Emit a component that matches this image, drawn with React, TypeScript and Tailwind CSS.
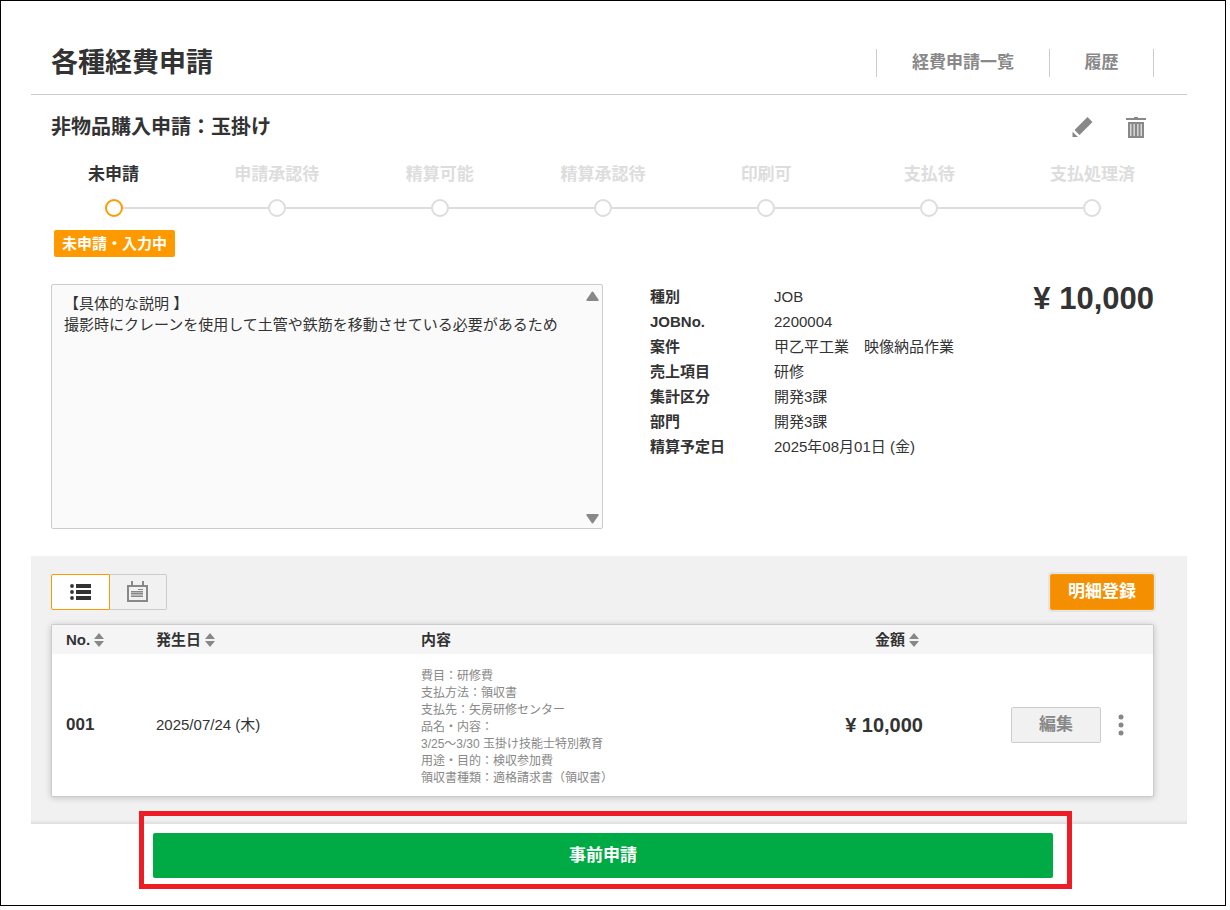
import React from "react";

const steps = ["未申請", "申請承認待", "精算可能", "精算承認待", "印刷可", "支払待", "支払処理済"];

const details: [string, string][] = [
  ["種別", "JOB"],
  ["JOBNo.", "2200004"],
  ["案件", "甲乙平工業　映像納品作業"],
  ["売上項目", "研修"],
  ["集計区分", "開発3課"],
  ["部門", "開発3課"],
  ["精算予定日", "2025年08月01日 (金)"],
];

const contents = [
  "費目：研修費",
  "支払方法：領収書",
  "支払先：矢房研修センター",
  "品名・内容：",
  "3/25～3/30 玉掛け技能士特別教育",
  "用途・目的：検収参加費",
  "領収書種類：適格請求書（領収書）",
];

const description = "【具体的な説明 】\n撮影時にクレーンを使用して土管や鉄筋を移動させている必要があるため";

function SortIcon() {
  return (
    <svg width="10" height="14" viewBox="0 0 10 14" fill="#888888" aria-hidden="true">
      <path d="M5 0 10 6H0zM5 14 0 8h10z" />
    </svg>
  );
}

function PencilIcon() {
  return (
    <svg width="22" height="22" viewBox="0 0 22 22" fill="#888888" aria-hidden="true">
      <path d="M15.500 1 20.500 6 7.500 19 2.500 14zM.5 15.700 6 21H.5z" />
    </svg>
  );
}

function TrashIcon() {
  return (
    <svg width="20" height="21" viewBox="0 0 20 21" aria-hidden="true">
      <path fill="#888888" d="M0 1h8V0h4v1h8v2H0zM2 5h16v16H2z" />
      <path fill="#d9d9d9" d="M4 7h1.500v12H4zM7.400 7h1.500v12H7.400zM11.100 7h1.500v12h-1.500zM14.500 7H16v12h-1.500z" />
    </svg>
  );
}

function ListIcon() {
  return (
    <svg width="22" height="18" viewBox="0 0 22 18" fill="#333333" aria-hidden="true">
      <circle cx="2" cy="3" r="1.900" />
      <circle cx="2" cy="9" r="1.900" />
      <circle cx="2" cy="15" r="1.900" />
      <path d="M6 1h15v4H6zM6 7h15v4H6zM6 13h15v4H6z" />
    </svg>
  );
}

function CalendarIcon() {
  return (
    <svg width="22" height="22" viewBox="0 0 22 22" aria-hidden="true">
      <path fill="#888888" fillRule="evenodd" d="M0 4h4V0h2v4h9V0h2v4h4v17H0zM2 6v13h17V6z" />
      <path fill="#888888" d="M11 8h5v1h-5z" />
      <path fill="#b8b8b8" d="M4 10h12v6H4z" />
      <path fill="#888888" d="M4 10h12v1H4zM4 12h12v1H4zM4 15h12v1H4z" />
    </svg>
  );
}

export default function App() {
  return (
    <div className="bg-white pr-1 pb-1 font-['Liberation_Sans','Noto_Sans_CJK_JP',sans-serif] text-[#333333]">
      <div className="border border-black px-[30px] pb-4">
        <div className="pr-2">
          <header className="flex items-center justify-between border-b border-[#cccccc] pt-[31px] pr-[33px] pl-5">
            <h1 className="text-[27px] leading-[62px] font-bold">各種経費申請</h1>
            <nav className="flex divide-x divide-[#cccccc] border-x border-[#cccccc] text-[17px] leading-7 font-bold text-[#888888]">
              <a href="#list" className="px-[35px]">経費申請一覧</a>
              <a href="#history" className="w-[103px] text-center">履歴</a>
            </nav>
          </header>

          <section className="pt-4 pr-8 pl-5">
            <div className="flex items-center justify-between pr-[9px]">
              <h2 className="text-xl leading-8 font-bold">非物品購入申請：玉掛け</h2>
              <div className="flex gap-8">
                <button type="button" aria-label="編集する"><PencilIcon /></button>
                <button type="button" aria-label="削除する"><TrashIcon /></button>
              </div>
            </div>

            <ol className="-mx-[19px] mt-[18px] grid grid-cols-7 text-center text-[17px] leading-7 font-bold">
              {steps.map((step, i) => (
                <li key={step} className={i === 0 ? "text-[#333333]" : "text-[#dddddd]"}>
                  <div>{step}</div>
                  <div className="mt-[10px] flex items-center">
                    <span className={i === 0 ? "h-[2px] flex-1" : "h-[2px] flex-1 bg-[#dddddd]"} />
                    <span
                      className={
                        i === 0
                          ? "size-[18px] rounded-full border-2 border-[#ff9900] bg-white"
                          : "size-[18px] rounded-full border-2 border-[#dddddd] bg-white"
                      }
                    />
                    <span className={i === steps.length - 1 ? "h-[2px] flex-1" : "h-[2px] flex-1 bg-[#dddddd]"} />
                  </div>
                </li>
              ))}
            </ol>
            <span className="mt-[13px] ml-[3px] inline-block rounded-xs bg-[#ff9900] px-2 text-[15px] leading-[27px] font-bold text-white">
              未申請・入力中
            </span>

            <div className="mt-[27px] flex items-start">
              <div className="flex h-[245px] w-1/2 rounded-xs border border-[#cccccc] bg-[#fafafa]">
                <textarea
                  readOnly
                  aria-label="具体的な説明"
                  defaultValue={description}
                  className="flex-1 resize-none overflow-hidden py-2 pl-3 text-[15px] leading-[21px] outline-none"
                />
                <div className="flex flex-col justify-between px-[3px] pt-[6px] pb-1">
                  <svg width="13" height="11" viewBox="0 0 13 11" fill="#888888" aria-hidden="true">
                    <path d="M5.500 1.200q1-1.200 2 0l5 7.300q.6 1.500-1 1.500h-10q-1.600 0-1-1.500z" />
                  </svg>
                  <svg width="13" height="11" viewBox="0 0 13 11" fill="#888888" aria-hidden="true">
                    <path d="M5.500 9.800q1 1.200 2 0l5-7.300q.6-1.500-1-1.500h-10q-1.600 0-1 1.500z" />
                  </svg>
                </div>
              </div>
              <dl className="ml-[47px] grid flex-1 grid-cols-[124px_1fr] text-[15px] leading-[25px]">
                {details.map(([term, value]) => (
                  <React.Fragment key={term}>
                    <dt className="font-bold">{term}</dt>
                    <dd>{value}</dd>
                  </React.Fragment>
                ))}
              </dl>
              <p className="pr-[1px] text-[31px] leading-[30px] font-bold">¥ 10,000</p>
            </div>
          </section>

          <section className="mt-[27px] bg-[#f1f1f1] px-5 pt-[18px] pb-[27px] shadow-[inset_0_-4px_4px_-3px_rgba(0,0,0,0.12)]">
            <div className="flex items-center justify-between pr-[13px]">
              <div className="flex">
                <button type="button" aria-label="一覧表示" aria-pressed="true" className="flex h-9 w-[59px] items-center justify-center rounded-l-xs border border-[#ff9900] bg-white">
                  <ListIcon />
                </button>
                <button type="button" aria-label="カレンダー表示" aria-pressed="false" className="flex h-9 w-[57px] items-center justify-center rounded-r-xs border border-l-0 border-[#cccccc]">
                  <CalendarIcon />
                </button>
              </div>
              <button type="button" className="h-9 rounded-xs border border-[#ff9900] bg-[#f38f00] px-[17px] text-[17px] font-bold text-white shadow-[0_0_0_2px_#e4e4e4]">
                明細登録
              </button>
            </div>

            <div className="mt-[14px] mr-[13px] rounded-xs border border-[#cccccc] bg-white shadow-[0_1px_6px_rgba(0,0,0,0.2)]">
              <table className="w-full table-fixed text-left text-[15px]">
                <thead className="bg-[#f5f5f5] leading-[29px]">
                  <tr>
                    <th className="w-[90px] pl-[14px]">
                      <button type="button" className="flex items-center gap-1">No.<SortIcon /></button>
                    </th>
                    <th className="w-[265px] pl-[14px]">
                      <button type="button" className="flex items-center gap-1">発生日<SortIcon /></button>
                    </th>
                    <th className="pl-[14px]">内容</th>
                    <th className="w-[148px] pr-1">
                      <button type="button" className="ml-auto flex items-center gap-1">金額<SortIcon /></button>
                    </th>
                    <th className="w-[230px]" aria-label="操作" />
                  </tr>
                </thead>
                <tbody>
                  <tr>
                    <td className="pl-[14px] text-[17px] font-bold">001</td>
                    <td className="pl-[14px]">2025/07/24 (木)</td>
                    <td className="pt-[14px] pb-[9px] pl-[14px] text-[12px] leading-[17px] text-[#888888]">
                      {contents.map((line) => (
                        <div key={line}>{line}</div>
                      ))}
                    </td>
                    <td className="text-right text-xl font-bold">¥ 10,000</td>
                    <td>
                      <div className="flex items-center justify-end gap-[17px] pr-[29px]">
                        <button type="button" className="h-9 w-[90px] rounded-xs border border-[#cccccc] bg-[#f1f1f1] text-[17px] font-bold text-[#888888]">
                          編集
                        </button>
                        <button type="button" aria-label="メニュー">
                          <svg width="6" height="22" viewBox="0 0 6 22" fill="#888888" aria-hidden="true">
                            <circle cx="3" cy="3" r="2.500" />
                            <circle cx="3" cy="11" r="2.500" />
                            <circle cx="3" cy="19" r="2.500" />
                          </svg>
                        </button>
                      </div>
                    </td>
                  </tr>
                </tbody>
              </table>
            </div>
          </section>

          <div className="relative -mt-[13px] mr-[115px] ml-[108px] border-[5px] border-[#ee1c25] pt-[17px] pr-[14px] pb-[6px] pl-[9px]">
            <button type="button" className="h-[45px] w-full rounded-xs bg-[#00ab45] text-[17px] font-bold text-white">
              事前申請
            </button>
          </div>
        </div>
      </div>
    </div>
  );
}
